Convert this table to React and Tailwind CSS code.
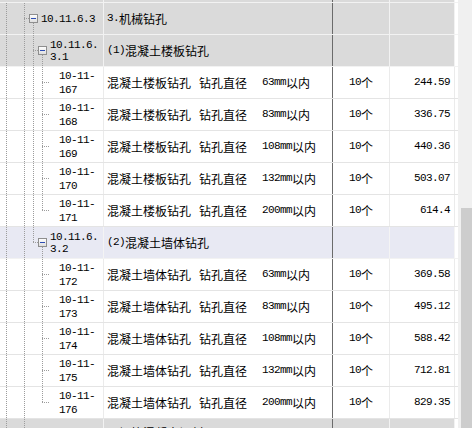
import React from "react";

const CN = "font-['Noto_Sans_CJK_SC',sans-serif] text-[12px] leading-none";
const NUM = "font-['Liberation_Mono','Noto_Sans_CJK_SC',monospace] text-[11px] tracking-[-0.6px]";

const TONES = {
  gray: {
    row: "bg-[#dadada] border-[#f2f2f2]",
    cell: "border-[#f2f2f2]",
  },
  white: {
    row: "bg-white border-[#e4e4e4]",
    cell: "border-[#ebebeb]",
  },
  lav: {
    row: "bg-[#e8e9f3] border-[#f2f2f2]",
    cell: "border-[#f4f4f4]",
  },
};

const GROUPS = [
  {
    code: ["10.11.6.", "3.1"],
    title: "(1)",
    name: "混凝土楼板钻孔",
    tone: "gray",
    items: [
      ["167", "63", "244.59"],
      ["168", "83", "336.75"],
      ["169", "108", "440.36"],
      ["170", "132", "503.07"],
      ["171", "200", "614.4"],
    ],
  },
  {
    code: ["10.11.6.", "3.2"],
    title: "(2)",
    name: "混凝土墙体钻孔",
    tone: "lav",
    items: [
      ["172", "63", "369.58"],
      ["173", "83", "495.12"],
      ["174", "108", "588.42"],
      ["175", "132", "712.81"],
      ["176", "200", "829.35"],
    ],
  },
];

// dotted tree connectors + the collapse box, drawn per row
function Connectors({ full = [], top = [], below = [], stub, box }) {
  const dot = { stroke: "#9c9c9c", strokeDasharray: "1 1", shapeRendering: "crispEdges" };
  return (
    <svg width="103" height="31" className="absolute left-0 top-0">
      <defs>
        <linearGradient id="bx" x1="0" y1="0" x2="0" y2="1">
          <stop offset="0" stopColor="#ffffff" />
          <stop offset="1" stopColor="#dcdcdc" />
        </linearGradient>
      </defs>
      {full.map((x) => (
        <line key={"f" + x} x1={x + 0.5} y1={0} x2={x + 0.5} y2={31} {...dot} />
      ))}
      {top.map((x) => (
        <line key={"t" + x} x1={x + 0.5} y1={0} x2={x + 0.5} y2={15} {...dot} />
      ))}
      {below.map((x) => (
        <line key={"b" + x} x1={x + 0.5} y1={20} x2={x + 0.5} y2={31} {...dot} />
      ))}
      {stub && <line x1={stub[0]} y1={15.5} x2={stub[1]} y2={15.5} {...dot} />}
      {box && (
        <g shapeRendering="crispEdges">
          <rect x={box - 3.5} y={11.5} width={8} height={8} fill="url(#bx)" stroke="#8e8e8e" />
          <rect x={box - 2} y={15} width={5} height={1} fill="#2d4db3" />
        </g>
      )}
    </svg>
  );
}

function Row({ tone, h = "h-8", tree, name, unit, price }) {
  const t = TONES[tone];
  return (
    <div className={`flex ${h} border-b ${t.row}`}>
      <div className={`relative flex w-[104px] shrink-0 items-center border-r ${t.cell}`}>{tree}</div>
      <div className="flex w-[229px] shrink-0 items-center border-r border-[#6b6b6b] pl-[3px]">{name}</div>
      <div className={`flex w-[57px] shrink-0 items-center justify-center border-r ${t.cell}`}>{unit}</div>
      <div className={`flex w-[65px] shrink-0 items-center justify-end border-r pr-[4px] ${t.cell}`}>{price}</div>
      <div className="w-[3px] shrink-0 bg-white" />
    </div>
  );
}

function Code({ lines, pl, leading }) {
  return (
    <div className={`relative ${pl} ${NUM} ${leading} text-black`}>
      {lines.map((l) => (
        <div key={l}>{l}</div>
      ))}
    </div>
  );
}

export default function App() {
  return (
    <div className="flex h-[428px] w-[472px] overflow-hidden bg-white text-black">
      <div className="w-[458px] shrink-0">
        <Row tone="gray" h="h-[3px]" />

        <Row
          tone="gray"
          tree={
            <>
              <Connectors full={[6, 24]} below={[33]} stub={[24, 29]} box={33} />
              <Code lines={["10.11.6.3"]} pl="pl-[41px]" leading="leading-[12px]" />
            </>
          }
          name={
            <div className="flex items-center">
              <span className={NUM}>3.</span>
              <span className={CN}>机械钻孔</span>
            </div>
          }
        />

        {GROUPS.map((g, gi) => {
          const lastGroup = gi === GROUPS.length - 1;
          const outer = lastGroup ? [6, 24] : [6, 24, 33];
          return (
            <React.Fragment key={g.name}>
              <Row
                tone={g.tone}
                tree={
                  <>
                    <Connectors
                      full={lastGroup ? [6, 24] : [6, 24, 33]}
                      top={lastGroup ? [33] : []}
                      below={[42]}
                      stub={[33, 38]}
                      box={42}
                    />
                    <Code lines={g.code} pl="pl-[50px]" leading="leading-[12px]" />
                  </>
                }
                name={
                  <div className="flex items-center">
                    <span className={NUM}>{g.title}</span>
                    <span className={CN}>{g.name}</span>
                  </div>
                }
              />
              {g.items.map(([no, dia, price], i) => {
                const last = i === g.items.length - 1;
                return (
                  <Row
                    key={no}
                    tone="white"
                    tree={
                      <>
                        <Connectors
                          full={last ? outer : [...outer, 42]}
                          top={last ? [42] : []}
                          stub={[42, 50]}
                        />
                        <Code lines={["10-11-", no]} pl="pl-[59px]" leading="leading-[14px]" />
                      </>
                    }
                    name={
                      <div className="flex items-center">
                        <span className={`w-[92px] ${CN}`}>{g.name}</span>
                        <span className={`w-[63px] ${CN}`}>钻孔直径</span>
                        <span className={NUM}>{dia}mm</span>
                        <span className={CN}>以内</span>
                      </div>
                    }
                    unit={
                      <div className="flex items-center">
                        <span className={NUM}>10</span>
                        <span className={CN}>个</span>
                      </div>
                    }
                    price={<span className={NUM}>{price}</span>}
                  />
                );
              })}
            </React.Fragment>
          );
        })}

        <Row
          tone="gray"
          tree={<Connectors full={[6]} top={[24]} stub={[24, 29]} box={33} />}
          name={
            <div className={`${CN} pt-[10px] leading-[14px]`}>
              <div>
                <span className={NUM}>4.</span>钢筋混凝土切割
              </div>
              <div>拆除</div>
            </div>
          }
        />
      </div>

      <div className="flex w-[14px] shrink-0 flex-col bg-[#f0f0f0]">
        <div className="h-[208px] shrink-0" />
        <div className="ml-[3px] flex-1 bg-[#cdcdcd]" />
      </div>
    </div>
  );
}
